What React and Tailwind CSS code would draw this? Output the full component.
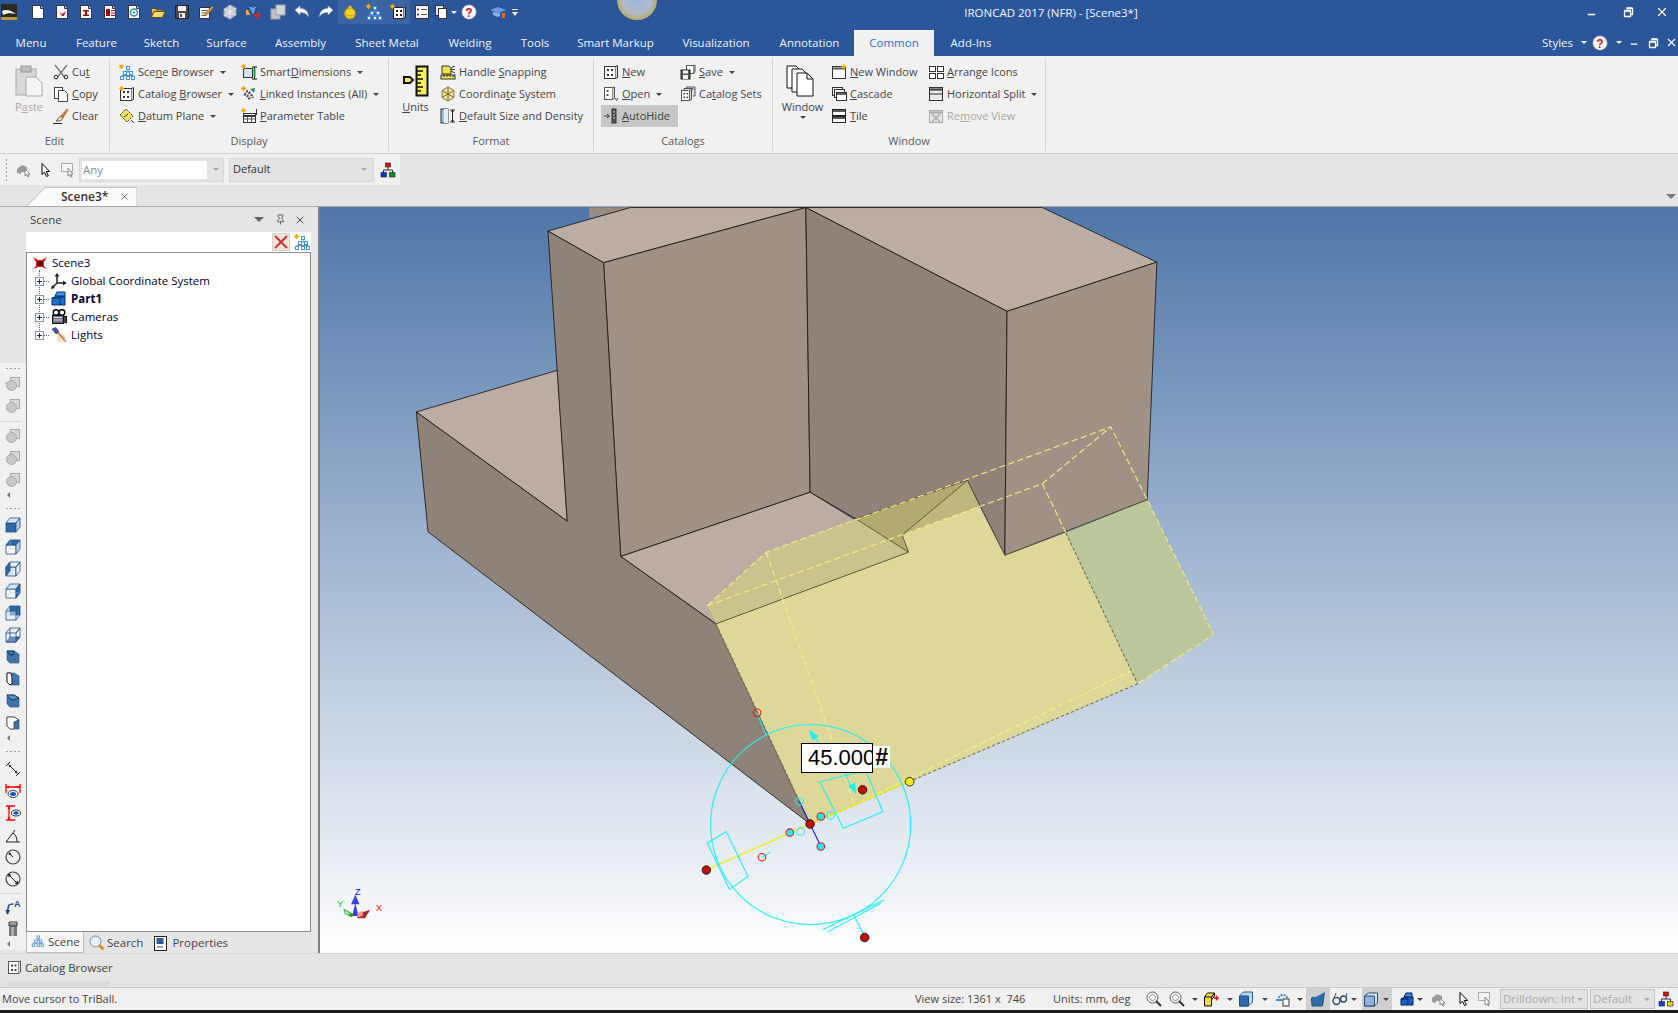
import { X, Minus, Pin } from 'lucide-react';

const FONT = 'font-["Open_Sans","Noto_Sans",sans-serif]';

const Ic = ({ w = 16, h = 16, children, className = '' }) => (
  <svg width={w} height={h} viewBox={`0 0 ${w} ${h}`} className={`shrink-0 ${className}`}>{children}</svg>
);

const Star = ({ x = 2.5, y = 2.5 }) => (
  <g stroke="#f2a900" strokeWidth="1">
    <path d={`M${x - 2.5} ${y}h5M${x} ${y - 2.5}v5M${x - 1.8} ${y - 1.8}l3.6 3.6M${x + 1.8} ${y - 1.8}l-3.6 3.6`} />
  </g>
);

const Caret = ({ className = '' }) => (
  <span className={`inline-block shrink-0 w-0 h-0 border-x-[3px] border-x-transparent border-t-[3px] border-t-[#444] ${className}`} />
);

const Page = ({ children, fill = '#fff', stroke = '#333' }) => (
  <Ic>
    <path d="M2.5 1.5h8l3 3v10h-11z" fill={fill} stroke={stroke} />
    <path d="M10.5 1.5v3h3" fill="#ddd" stroke={stroke} />
    {children}
  </Ic>
);

const TreeNodes = () => (
  <g fill="#fff" stroke="#4a8fd6" strokeWidth="1">
    <path d="M9 5v3M6 10V8h6v2M3 13v-1.500h6M14 13v-1.500H9" fill="none" />
    <rect x="7.500" y="2.500" width="3" height="3" />
    <rect x="4.500" y="7.500" width="3" height="3" />
    <rect x="10.500" y="7.500" width="3" height="3" />
    <rect x="1.500" y="12.500" width="3" height="3" />
    <rect x="7.500" y="12.500" width="3" height="3" />
    <rect x="12.500" y="12.500" width="3" height="3" />
  </g>
);

const TreeIcon = () => <Ic><TreeNodes /><Star /></Ic>;

const CatalogBox = ({ star, stroke = '#333' }) => (
  <Ic>
    <rect x="1.500" y="2.500" width="11" height="12" fill="#fff" stroke={stroke} />
    <path d="M12.500 2.500l2-1v12l-2 1" fill="#ddd" stroke={stroke} />
    <g fill={stroke}>
      <rect x="4" y="5" width="2" height="2" />
      <rect x="8" y="5" width="2" height="2" />
      <rect x="4" y="10" width="2" height="2" />
      <rect x="8" y="10" width="2" height="2" />
    </g>
    {star && <Star />}
  </Ic>
);

const Help = () => (
  <Ic>
    <circle cx="8" cy="8" r="7" fill="#fff" stroke="#c9c9c9" strokeDasharray="1.500 1" />
    <text x="8" y="12.500" textAnchor="middle" fontSize="12" fontWeight="700" fontFamily="Liberation Sans, sans-serif" fill="#e0101a">?</text>
  </Ic>
);

const Restore = () => (
  <Ic w={12} h={12}>
    <path d="M3.500 2.500h6v6h-2M1.500 5h6v5.500h-6z" fill="none" stroke="#fff" strokeWidth="1.300" />
    <path d="M1.500 4.500h6M3.500 2h6" stroke="#fff" strokeWidth="1.500" />
  </Ic>
);

const LogicTree = ({ top = '#e01010', l = '#1030d0', r = '#109030' }) => (
  <Ic>
    <path d="M8 5v3M3.500 11V8h9v3" fill="none" stroke="#333" />
    <rect x="5.500" y="1" width="5" height="4" fill={top} stroke="#222" strokeWidth=".6" />
    <rect x="1" y="10.500" width="5.500" height="4.500" fill={l} stroke="#222" strokeWidth=".6" />
    <rect x="9.500" y="10.500" width="5.500" height="4.500" fill={r} stroke="#222" strokeWidth=".6" />
  </Ic>
);

const Cursor = ({ ghost }) => (
  <Ic>
    <path d="M4 1.500v11l2.500-2.300 2 4.300 1.800-.800-2-4.200h3.400z" fill={ghost ? '#eee' : '#fff'} stroke={ghost ? '#aaa' : '#000'} />
  </Ic>
);

const SelectPart = () => (
  <Ic>
    <path d="M1 7l5-4 5 2v5H5v2l-4-1z" fill="#9a9a9a" />
    <path d="M9 7v7l1.800-1.500 1.200 2.500 1-.500-1.200-2.400H14z" fill="#fff" stroke="#888" />
  </Ic>
);

const SelectFace = () => (
  <Ic>
    <rect x="1.500" y="1.500" width="11" height="8" fill="#f4f4f4" stroke="#aaa" />
    <path d="M8 6v8l1.800-1.500 1.200 2.500 1-.500-1.200-2.400H13z" fill="#fff" stroke="#888" />
  </Ic>
);

// quick access bar icons
const qat = [
  <Page key="new" />,
  <Page key="a"><path d="M5 7l3 3 4-3-2 5H8z" fill="#c81e1e" /></Page>,
  <Page key="b"><path d="M5 6h6v1.500H9v3h2V12H5v-1.500h2v-3H5z" fill="#a01010" /></Page>,
  <Page key="c"><path d="M4 5h4v7H4zM9 6h4v1H9zM9 8.500h4v1H9zM9 11h4v1H9z" fill="#a01010" /></Page>,
  <Page key="d"><circle cx="8" cy="8.500" r="3.500" fill="none" stroke="#2a8fb0" strokeWidth="1.500" /><circle cx="8" cy="8.500" r="1" fill="#14506a" /></Page>,
  <Ic key="open">
    <path d="M1.500 4.500h4l1 1.500h6v2h-9l-2 5z" fill="#e8c14e" stroke="#6a5310" />
    <path d="M1.500 13.500l2.500-6h11l-2.500 6z" fill="#f3d873" stroke="#6a5310" />
  </Ic>,
  <Ic key="save">
    <path d="M1.500 1.500h13v13h-13z" fill="#4a4a4a" stroke="#222" />
    <rect x="4" y="2" width="8" height="5" fill="#f2f2f2" />
    <rect x="5" y="9" width="6" height="5" fill="#f2f2f2" />
    <rect x="6" y="10" width="2" height="3" fill="#444" />
  </Ic>,
  <Ic key="notes">
    <rect x="1.500" y="3.500" width="10" height="11" fill="#fff" stroke="#333" />
    <path d="M3.500 6.500h6M3.500 9h6M3.500 11.500h4" stroke="#555" />
    <path d="M7 10l7-8 1.500 1.500-7 8-2 .500z" fill="#f0a63a" stroke="#7a5210" strokeWidth=".6" />
  </Ic>,
  <Ic key="gray">
    <path d="M2 5l6-4 6 3v7l-6 4-6-3z" fill="#c4c9cf" stroke="#9ba0a6" />
    <path d="M8 1v14M2 5l12 6M14 4L2 12" stroke="#eef0f2" />
  </Ic>,
  <Ic key="cube">
    <rect x="0" y="6" width="4" height="5" fill="#e9a35a" />
    <path d="M3 3l4-2 3 2v5l-3 2-4-2z" fill="#3f78c4" stroke="#1c3f70" />
    <path d="M7 5.500L3 3M7 5.500L10 3M7 5.500V10" stroke="#cfe0f5" strokeWidth=".7" />
    <path d="M8 11.500h7M11.500 8v7" stroke="#d92a1a" strokeWidth="2" />
  </Ic>,
  <Ic key="pages">
    <rect x="1" y="5" width="9" height="10" fill="#bfc3c7" stroke="#9ca0a4" />
    <rect x="6" y="1" width="9" height="10" fill="#d2d5d8" stroke="#a4a8ac" />
  </Ic>,
  <Ic key="undo"><path d="M1 6l5-4v2.500c5 0 8 2.500 8.500 8-2-3-4-4-8.500-4V11z" fill="#fff" stroke="#aab4c2" strokeWidth=".6" /></Ic>,
  <Ic key="redo"><path d="M15 6l-5-4v2.500c-5 0-8 2.500-8.500 8 2-3 4-4 8.500-4V11z" fill="#fff" stroke="#aab4c2" strokeWidth=".6" /></Ic>,
  <Ic key="ball">
    <circle cx="8" cy="9.500" r="5.500" fill="#f3d21f" stroke="#b08c10" />
    <path d="M5 4.500h6L8 1z" fill="#e8b93a" />
    <path d="M3 10c3 2.500 7 2.500 10 0" stroke="#c79a16" fill="none" />
  </Ic>,
  <Ic key="tree"><TreeNodes /><Star /></Ic>,
  <Ic key="cat">
    <rect x="3.500" y="3.500" width="10" height="11" fill="#fff" stroke="#222" />
    <path d="M13.500 3.500l2-1v11l-2 1" fill="#bbb" stroke="#222" />
    <path d="M6 6h2v2H6zM10 6h2v2h-2zM6 10h2v2H6zM10 10h2v2h-2z" fill="#222" />
    <Star />
  </Ic>,
  <Ic key="list">
    <rect x="1.500" y="1.500" width="13" height="13" fill="#f4f4f4" stroke="#333" />
    <path d="M3 4.500h2v2H3zM3 9.500h2v2H3z" fill="#555" />
    <path d="M7 5.500h6M7 10.500h6" stroke="#555" />
  </Ic>,
  <span key="stack" className="flex items-center gap-[1px]">
    <Ic>
      <rect x="1.500" y="1.500" width="8" height="10" fill="#e8e8e8" stroke="#333" />
      <rect x="4.500" y="4.500" width="8" height="10" fill="#fff" stroke="#333" />
    </Ic>
    <span className="w-0 h-0 border-x-[3px] border-x-transparent border-t-[3px] border-t-white" />
  </span>,
];

const Cut = () => (
  <Ic>
    <path d="M2 1l11 14M14 1L3 15" stroke="#777" strokeWidth="1.400" />
    <circle cx="3" cy="13" r="1.800" fill="#fff" stroke="#222" />
    <circle cx="13" cy="13" r="1.800" fill="#fff" stroke="#222" />
  </Ic>
);
const Copy = () => (
  <Ic>
    <rect x="1.500" y="1.500" width="8" height="11" fill="#fff" stroke="#444" />
    <path d="M5.500 4.500h6l3 3v8h-9z" fill="#fff" stroke="#444" />
  </Ic>
);
const Brush = () => (
  <Ic>
    <path d="M8 8l6-7 1 1-5 8z" fill="#d87a2a" stroke="#8a4a10" strokeWidth=".5" />
    <path d="M3 13c2-1 2-4 5-5l2 2c-1 3-4 3-7 3z" fill="#e8d9a8" stroke="#333" strokeWidth=".7" />
    <path d="M0 15.500h9" stroke="#222" />
  </Ic>
);
const Datum = () => (
  <Ic>
    <path d="M1 7l6-6 7 7-6 6z" fill="#f0e35a" stroke="#333" strokeDasharray="2 1" />
    <path d="M5 9l4-3" stroke="#333" />
    <path d="M12 12l3 3" stroke="#333" />
  </Ic>
);
const Smart = () => (
  <Ic>
    <rect x="2.500" y="4.500" width="9" height="9" fill="#cfe3f5" stroke="#333" />
    <path d="M13.500 3v12M11 3h5M11 15h5" stroke="#111" />
    <path d="M13.500 5v8" stroke="#1c9c3a" strokeWidth="2" />
    <Star />
  </Ic>
);
const Linked = () => (
  <Ic>
    <path d="M3 8c3 1 5 3 6 6M5 5c3 1 6 4 7 7" stroke="#555" strokeWidth="2.500" strokeDasharray="2 1" fill="none" />
    <path d="M9 3l5-1-1 5z" fill="#2a8a6a" />
    <Star />
  </Ic>
);
const Table = () => (
  <Ic>
    <rect x="2.500" y="5.500" width="12" height="9" fill="#fff" stroke="#333" />
    <path d="M2.500 8h12" stroke="#333" strokeWidth="2" />
    <path d="M6.500 8v6M10.500 8v6M2.500 11h12" stroke="#555" />
    <path d="M15.500 1v6" stroke="#333" />
    <Star />
  </Ic>
);
const HandleSnap = () => (
  <Ic>
    <path d="M2 2h7l2 3v5H2z" fill="#f1e34b" stroke="#333" />
    <path d="M11 4l4-2M11 5.500h4M11 7l4 2" stroke="#333" />
    <rect x="1" y="11" width="14" height="4" fill="#f1e34b" stroke="#333" />
    <path d="M4 11v2M7 11v2M10 11v2M13 11v2" stroke="#333" />
  </Ic>
);
const CoordSys = () => (
  <Ic>
    <path d="M8 1l6 3.500v7L8 15l-6-3.500v-7z" fill="#efe29a" stroke="#8a7a3a" />
    <path d="M8 1v14M2 4.500l12 7M14 4.500l-12 7" stroke="#7a6a2a" />
  </Ic>
);
const DefaultSize = () => (
  <Ic>
    <rect x="1" y="1" width="7" height="14" fill="#9bbfe6" stroke="#333" />
    <rect x="4" y="1" width="4" height="14" fill="#e6eef8" />
    <path d="M10 2h5M10 14h5M12.500 2v12" stroke="#222" />
    <path d="M11 4l1.500-2L14 4M11 12l1.500 2L14 12" fill="#222" />
  </Ic>
);
const OpenCat = () => (
  <Ic>
    <rect x="1.500" y="1.500" width="8" height="12" fill="#fff" stroke="#555" />
    <path d="M9.500 1.500l2-.500v11l-2 1.500" fill="#ccc" stroke="#555" />
    <path d="M3.500 4h2v2h-2zM3.500 8h2v2h-2z" fill="#555" />
    <path d="M12 12l1.500 2.500L15 12" stroke="#444" fill="none" />
  </Ic>
);
const SaveCat = () => (
  <Ic>
    <rect x="6.500" y="1.500" width="7" height="8" fill="#fff" stroke="#555" />
    <path d="M13.500 1.500l1.500-.500v7l-1.500 1" fill="#ccc" stroke="#555" />
    <rect x="1" y="6" width="9" height="9" fill="#55604a" stroke="#222" />
    <rect x="3" y="6.500" width="5" height="3" fill="#f2f2f2" />
    <rect x="3" y="11" width="5" height="4" fill="#f2f2f2" />
  </Ic>
);
const CatSets = () => (
  <Ic>
    <rect x="1.500" y="4.500" width="8" height="10" fill="#fff" stroke="#555" />
    <path d="M9.500 4.500l2-1v10l-2 1zM4 4V2.500h9V4M6.500 2.500V1h8.500v9h-2" fill="#ddd" stroke="#555" />
    <path d="M3.500 7h1.500v1.500H3.500zM6.500 7H8v1.500H6.500zM3.500 10.500h1.500V12H3.500zM6.500 10.500H8V12H6.500z" fill="#444" />
  </Ic>
);
const AutoHideIc = () => (
  <Ic>
    <path d="M1 8h5M4 6l2.500 2L4 10" stroke="#444" fill="none" />
    <rect x="9" y="1" width="4" height="14" fill="#555" stroke="#333" />
    <path d="M10 4h2M10 7h2M10 10h2" stroke="#ccc" />
  </Ic>
);
const NewWin = () => (
  <Ic>
    <rect x="1.500" y="2.500" width="13" height="12" fill="#fff" stroke="#333" />
    <path d="M1.500 4.500h13" stroke="#555" strokeWidth="2" />
    <Star x={13} y={2.5} />
  </Ic>
);
const CascadeIc = () => (
  <Ic>
    <rect x="1.500" y="1.500" width="10" height="8" fill="#eee" stroke="#333" />
    <rect x="3.500" y="3.500" width="10" height="8" fill="#eee" stroke="#333" />
    <rect x="5.500" y="6.500" width="10" height="8" fill="#fff" stroke="#333" />
    <path d="M5.500 8h10" stroke="#333" strokeWidth="1.500" />
  </Ic>
);
const TileIc = () => (
  <Ic>
    <rect x="1.500" y="1.500" width="13" height="6" fill="#fff" stroke="#222" />
    <path d="M1.500 3h13" stroke="#222" strokeWidth="1.500" />
    <rect x="1.500" y="8.500" width="13" height="6" fill="#fff" stroke="#222" />
    <path d="M1.500 10h13" stroke="#222" strokeWidth="1.500" />
  </Ic>
);
const ArrangeIc = () => (
  <Ic>
    <rect x="1.500" y="2.500" width="6" height="5" fill="#fff" stroke="#333" />
    <rect x="9.500" y="2.500" width="6" height="5" fill="#fff" stroke="#333" />
    <rect x="1.500" y="9.500" width="6" height="5" fill="#fff" stroke="#333" />
    <rect x="9.500" y="9.500" width="6" height="5" fill="#fff" stroke="#333" />
  </Ic>
);
const SplitIc = () => (
  <Ic>
    <rect x="1.500" y="1.500" width="13" height="13" fill="#e8e8e8" stroke="#333" />
    <path d="M1.500 3.500h13" stroke="#333" strokeWidth="2" />
    <path d="M1.500 8h13" stroke="#333" />
  </Ic>
);
const RemoveIc = () => (
  <Ic>
    <rect x="1.500" y="2.500" width="13" height="12" fill="#e6e6e6" stroke="#aaa" />
    <path d="M1.500 4.500h13" stroke="#aaa" strokeWidth="2" />
    <path d="M4 6l8 8M12 6l-8 8" stroke="#b5b5b5" strokeWidth="2" />
  </Ic>
);

const Row = ({ icon, children, caret, active, dim, className = '' }) => (
  <div className={`h-[22px] flex items-center gap-[3px] whitespace-nowrap ${active ? 'bg-[#c6c6c6]' : ''} ${dim ? 'text-[#a8a8a8]' : 'text-[#444]'} ${className}`}>
    {icon}
    <span>{children}</span>
    {caret && <Caret className="ml-[3px]" />}
  </div>
);

const BigBtn = ({ icon, children, caret, dim, className = '' }) => (
  <div className={`h-[66px] flex flex-col items-center ${dim ? 'text-[#a8a8a8]' : 'text-[#444]'} ${className}`}>
    <div className="h-[32px] mt-[4px] mb-[1px]">{icon}</div>
    <span className="leading-[18px]">{children}</span>
    {caret && <Caret />}
  </div>
);

const Group = ({ label, width, children }) => (
  <div className={`${width} shrink-0 flex flex-col border-r border-[#d6d6d6] my-[2px]`}>
    <div className="h-[66px] mt-[3px] flex">{children}</div>
    <div className="mt-[5px] text-center text-[#5a5a5a] leading-[18px]">{label}</div>
  </div>
);

const tabs = [
  ['Menu', 'w-[62px]'], ['Feature', 'w-[69px]'], ['Sketch', 'w-[61px]'], ['Surface', 'w-[69px]'],
  ['Assembly', 'w-[79px]'], ['Sheet Metal', 'w-[94px]'], ['Welding', 'w-[72px]'], ['Tools', 'w-[58px]'],
  ['Smart Markup', 'w-[103px]'], ['Visualization', 'w-[98px]'], ['Annotation', 'w-[89px]'],
];

const Cube = ({ f = '#fff', t = '#dbe7f4', r = '#b9d0ea', back }) => (
  <Ic>
    <path d="M1 6h10v9H1z" fill={f} stroke="#1f4d80" strokeWidth=".8" />
    <path d="M1 6l4-5h10l-4 5z" fill={t} stroke="#1f4d80" strokeWidth=".8" />
    <path d="M11 6l4-5v9l-4 5z" fill={r} stroke="#1f4d80" strokeWidth=".8" />
    {back}
  </Ic>
);

const IsoCube = ({ corner }) => (
  <Ic>
    <path d="M2 2h7l5 3v9H5l-3-3z" fill="#3f74ad" stroke="#1f4d80" strokeWidth=".6" />
    {corner === 'a' && <path d="M2 2h7l-1 4H5z" fill="#3f74ad" stroke="#16395e" />}
    {corner === 'b' && <path d="M2 2h4l1 5v6l-2 1-3-3z" fill="#fff" stroke="#222" />}
    {corner === 'c' && <path d="M2 2h7l5 3-6 2-3-1z" fill="#5c8dc4" stroke="#16395e" />}
    {corner === 'd' && <path d="M2 2h7l5 3-5 2v7H5l-3-3z" fill="#fff" stroke="#222" strokeWidth=".7" />}
  </Ic>
);

const viewCubes = [
  <Cube key="1" f="#2f6ba8" />,
  <Cube key="2" t="#2f6ba8" back={<path d="M5 1v9h10M5 10l-4 5" stroke="#9bb8d8" strokeWidth=".6" fill="none" />} />,
  <Ic key="3">
    <path d="M1 6h10v9H1z" fill="#dbe7f4" stroke="#1f4d80" strokeWidth=".8" />
    <path d="M11 6l4-5v9l-4 5zM5 1h10l-4 5H1z" fill="#eef4fb" stroke="#1f4d80" strokeWidth=".8" />
    <path d="M1 6l4-5v9l-4 5z" fill="#2f6ba8" stroke="#1f4d80" strokeWidth=".8" />
  </Ic>,
  <Cube key="4" r="#2f6ba8" back={<path d="M5 1v9h10M5 10l-4 5" stroke="#9bb8d8" strokeWidth=".6" fill="none" />} />,
  <Ic key="5">
    <path d="M5 1h10v9H5z" fill="#2f6ba8" stroke="#1f4d80" strokeWidth=".8" />
    <path d="M1 6h10v9H1z" fill="#dbe7f4" fillOpacity=".55" stroke="#1f4d80" strokeWidth=".8" />
    <path d="M1 6l4-5M11 6l4-5M11 15l4-5" stroke="#1f4d80" strokeWidth=".8" />
  </Ic>,
  <Ic key="6">
    <path d="M1 15l4-5h10l-4 5z" fill="#2f6ba8" stroke="#1f4d80" strokeWidth=".8" />
    <path d="M1 6h10v9H1zM1 6l4-5h10l-4 5M11 6l4-5v9M5 1v9" fill="#eef4fb" fillOpacity=".3" stroke="#1f4d80" strokeWidth=".8" />
  </Ic>,
  <IsoCube key="7" corner="a" />,
  <IsoCube key="8" corner="b" />,
  <IsoCube key="9" corner="c" />,
  <IsoCube key="10" corner="d" />,
];

const dimIcons = [
  <Ic key="1">
    <path d="M1 5l4-4M11 15l4-4M3.500 3.500l9 9" stroke="#222" fill="none" />
    <path d="M3.500 3.500l3 1-2 2zM12.500 12.500l-3-1 2-2z" fill="#222" />
  </Ic>,
  <Ic key="2">
    <path d="M1 1v9M15 1v9M1 4h14" stroke="#f00" strokeWidth="1.300" />
    <path d="M1 4l3-1.500v3zM15 4l-3-1.500v3z" fill="#f00" />
    <ellipse cx="8" cy="11" rx="5" ry="3.500" fill="#fff" stroke="#333" />
    <ellipse cx="8" cy="11" rx="3" ry="2" fill="#0a55d8" />
  </Ic>,
  <Ic key="3">
    <path d="M1 1h9M1 15h9M4 1v14" stroke="#f00" strokeWidth="1.300" />
    <path d="M4 1l-1.500 3h3zM4 15l-1.500-3h3z" fill="#f00" />
    <ellipse cx="11" cy="8" rx="4.500" ry="3" fill="#fff" stroke="#333" />
    <ellipse cx="11" cy="8" rx="2.700" ry="1.700" fill="#0a55d8" />
  </Ic>,
  <Ic key="4">
    <path d="M1 15h14M1 15L10 3" stroke="#222" fill="none" />
    <path d="M8 6c3 2 4 5 4 9" stroke="#222" fill="none" />
  </Ic>,
  <Ic key="5">
    <circle cx="8" cy="8" r="7" fill="none" stroke="#444" strokeWidth="1.200" />
    <path d="M4 4l4 4" stroke="#222" />
    <path d="M3.500 3.500l3 .5-2.500 2.500z" fill="#222" />
  </Ic>,
  <Ic key="6">
    <circle cx="8" cy="8" r="7" fill="none" stroke="#444" strokeWidth="1.200" />
    <path d="M3.500 3.500l9 9" stroke="#222" />
    <path d="M3 3l3.500.5L3.500 6.500zM13 13l-3.500-.5 3-3z" fill="#222" />
  </Ic>,
];

const Dots = () => <div className="h-[10px] flex items-center justify-center gap-[2px]">{[0, 1, 2, 3].map(i => <span key={i} className="w-[2px] h-[1px] bg-[#999]" />)}</div>;
const Tri = () => <div className="h-[8px] flex items-center pl-[7px]"><span className="w-0 h-0 border-y-[3px] border-y-transparent border-r-[3px] border-r-[#777]" /></div>;
const Slot = ({ children }) => <div className="h-[22px] flex items-center justify-center">{children}</div>;
const Overlap = ({ plus }) => (
  <Ic>
    {plus && <path d="M0 7h4" stroke="#555" />}
    <rect x="5.500" y="1.500" width="9" height="9" fill="#bbb" stroke="#555" />
    <circle cx="6.500" cy="9.500" r="5" fill="#999" stroke="#555" />
  </Ic>
);

const treeRows = [
  {
    label: 'Global Coordinate System',
    icon: (
      <Ic>
        <path d="M6 1v9M6 10h9M6 10l-5 5" stroke="#222" strokeWidth="1.500" />
        <path d="M6 0l-2.500 3.500h5zM15.500 10L12 7.500v5zM0 16l1-4 3 3z" fill="#222" />
      </Ic>
    ),
  },
  {
    label: 'Part1',
    bold: true,
    icon: (
      <Ic>
        <path d="M1 7l5-2h8v9H1z" fill="#1f6fd0" stroke="#0b2f66" />
        <path d="M4 5l2-4h8v4H6z" fill="#3f92ea" stroke="#0b2f66" />
        <path d="M1 7h8v7" fill="none" stroke="#0b2f66" />
        <path d="M9 7l5-2" stroke="#0b2f66" />
      </Ic>
    ),
  },
  {
    label: 'Cameras',
    icon: (
      <Ic>
        <circle cx="5" cy="3.500" r="2.800" fill="#fff" stroke="#111" strokeWidth="1.500" />
        <circle cx="11" cy="3.500" r="2.800" fill="#fff" stroke="#111" strokeWidth="1.500" />
        <rect x="1.500" y="6.500" width="11" height="8" fill="#6f6f8a" stroke="#111" />
        <path d="M3 8.500h8M3 11h8" stroke="#ddd" />
        <path d="M12.500 8l3-1v7l-3-1z" fill="#444" stroke="#111" />
      </Ic>
    ),
  },
  {
    label: 'Lights',
    icon: (
      <Ic>
        <circle cx="10" cy="11" r="4.500" fill="#efe6b8" />
        <path d="M1 2l4-1.500L8 5 5 7z" fill="#2a5ec8" stroke="#123" strokeWidth=".5" />
        <path d="M4 3l11 12" stroke="#e02020" />
        <path d="M7 5l7 7" stroke="#888" strokeWidth=".8" />
      </Ic>
    ),
  },
];

// drawn in the coordinates of the scaled screenshot, viewBox maps them onto the viewport
const Scene = () => (
  <svg viewBox="299 193.500 1269 697" preserveAspectRatio="none" className="absolute inset-0 w-full h-full">
    <g stroke="#1c1a18" strokeWidth=".8" strokeLinejoin="round">
      <path d="M550.600 194H589L550.600 204z" fill="#9a8b80" stroke="none" />
      <path d="M512 216l77-22h164L564 245.500z" fill="#bbada3" />
      <path d="M753 194h221l107 51-140 46z" fill="#bbada3" />
      <path d="M564 245.500L753 194l4 266-177 60z" fill="#a09186" />
      <path d="M753 194L941 291 939 519 904 449 800 485 757 460z" fill="#8f8279" />
      <path d="M941 291l140-46-9 222-133 52z" fill="#a09186" />
      <path d="M580 520l177-60 92 56-180 67z" fill="#bbada3" />
      <path d="M389 385l132-39 9 141z" fill="#bbada3" />
      <path d="M512 216L564 245.500 580 520 669 583 757 770 400 497 389 385 530 487z" fill="#8f8279" />
    </g>
    <path d="M669 583L849 516 843 500 915 473 939 519 996 498 1063 639 757 770z" fill="#ddd79a" />
    <path d="M996 498l76-31 62 126-71 46z" fill="#bcc69c" />
    <path d="M669 583l-8-17 55-50 84-31 49 31z" fill="#c9c48d" />
    <path d="M800 485l104-36-61 51 6 16z" fill="#b1ab72" />
    <path d="M843 500l61-51 11 24z" fill="#bdb67d" />
    <path d="M669 583L849 516M800 485l49 31-6-16 61-51 35 70 133-52" stroke="#5f5b3a" strokeWidth=".9" fill="none" />
    <g stroke="#f4f07c" strokeWidth="1" strokeDasharray="6 3" fill="none">
      <path d="M661 566l55-50 322-117 34 68 62 126-71 46" />
      <path d="M661 566l313-114 64-53" />
      <path d="M716 516l84 240" />
      <path d="M974 452l22 46" />
      <path d="M1059 626L778 762" />
      <path d="M669 583l88 187" stroke="#77734a" strokeDasharray="3 2" />
      <path d="M757 770l306-131" stroke="#77734a" strokeDasharray="3 2" />
      <path d="M996 498l67 141" stroke="#6c6d48" strokeDasharray="3 2" />
    </g>
    <path d="M660 813l97-43" stroke="#f0ee20" strokeWidth="1.300" />
    <path d="M757 770l10 21M747 749l10 21" stroke="#1020e0" />
    <path d="M757 770l93-40" stroke="#f0ee20" strokeWidth="1.300" />
    <g stroke="#19f0f5" strokeWidth="1" fill="none">
      <ellipse cx="757.500" cy="770.500" rx="93.500" ry="93.500" />
      <path d="M678.600 777L661 788l20.500 43 17.500-12z" />
      <path d="M766 730.500L788 774l37-15.500-16-38.500z" />
      <path d="M769 868.500l57-27.500M773 871l50-27" />
      <path d="M798 855l10 21" />
      <path d="M707 666l9 21M712 801l8-5" />
      <path d="M759 687l7.500 8" />
      <path d="M789 721l7 16" />
    </g>
    <path d="M756 682l9 6-6 4zM800 742l-7-7 6-4z" fill="#19f0f5" />
    <g stroke="#ee1010" strokeWidth="1">
      <circle cx="738" cy="778" r="3.500" fill="#19f0f5" />
      <circle cx="767" cy="763" r="3.500" fill="#19f0f5" />
      <circle cx="767" cy="791" r="3.500" fill="#19f0f5" />
      <circle cx="707.500" cy="666" r="3.500" fill="none" />
      <circle cx="712" cy="801" r="3.500" fill="none" />
    </g>
    <g stroke="#19f0f5" strokeWidth="1" fill="none">
      <circle cx="747" cy="749" r="3.500" />
      <circle cx="776" cy="762" r="3.500" />
      <circle cx="748" cy="777" r="3.500" />
    </g>
    <g stroke="#111" strokeWidth=".8" fill="#c00f0f">
      <circle cx="757" cy="770" r="4" />
      <circle cx="660" cy="813" r="4" />
      <circle cx="806" cy="738" r="4" />
      <circle cx="808" cy="876" r="4" />
      <circle cx="850" cy="730.500" r="4" fill="#f2ee1a" />
    </g>
    <path d="M332 844l-3 12h6z" fill="#3a40d8" />
    <path d="M332 836l-4 9h8z" fill="#3a40d8" />
    <path d="M330 854l-9-5 1 5 7 3z" fill="#2d9a34" />
    <path d="M334 854l12-4-5 8-7 0z" fill="#a82a2a" />
    <path d="M322 850l6 4-6 1z" fill="#9be59b" />
    <path d="M334 853l5-2 0 5-5 1z" fill="#f09a9a" />
    <g fontFamily="Liberation Sans, sans-serif" fontSize="9">
      <text x="331.500" y="836" fill="#1010e8">Z</text>
      <text x="315" y="848" fill="#14d014">Y</text>
      <text x="351" y="851" fill="#e81010">X</text>
    </g>
  </svg>
);

const statusIcons = {
  zoom: (
    <Ic>
      <circle cx="6.500" cy="6.500" r="5.500" fill="#fff" stroke="#555" />
      <circle cx="6.500" cy="6.500" r="3" fill="none" stroke="#888" />
      <path d="M10 10l5 5" stroke="#333" strokeWidth="2" />
    </Ic>
  ),
  yellow: (
    <Ic>
      <path d="M1.500 6l3-4h7v3l-3 4v6h-7z" fill="#f0dc3c" stroke="#111" />
      <path d="M8.500 15V6h-7M8.500 6l3-4" fill="none" stroke="#111" />
      <path d="M11 7h5M13.500 4.500v5" stroke="#e01010" strokeWidth="1.500" />
    </Ic>
  ),
  blue: (
    <Ic>
      <path d="M1.500 5l4-4h9v10l-4 4h-9z" fill="#c2d8ee" stroke="#2c5a8a" />
      <path d="M1.500 5h9v10h-9z" fill="#2f6ba8" stroke="#1f4d80" />
    </Ic>
  ),
  orbit: (
    <Ic>
      <path d="M4 7c0-4 8-4 8 0" stroke="#3a8ad0" strokeWidth="2" fill="none" strokeDasharray="2 1" />
      <rect x="8" y="8" width="6" height="7" fill="#fff" stroke="#333" />
      <path d="M1 9h6" stroke="#3a8ad0" strokeWidth="2" />
    </Ic>
  ),
  face: (
    <Ic>
      <path d="M1.500 7l3-1 10-5-2 14H2z" fill="#2f6ba8" stroke="#1f4d80" />
      <path d="M4.500 6l10-5" stroke="#cfe0f5" />
    </Ic>
  ),
  glasses: (
    <Ic>
      <circle cx="4.500" cy="10" r="3.500" fill="none" stroke="#2c4a6a" strokeWidth="1.400" />
      <circle cx="11.500" cy="8" r="3" fill="none" stroke="#2c4a6a" strokeWidth="1.400" />
      <path d="M2 7l2-5M8 9l1-1M14 6l1-4" stroke="#555" />
    </Ic>
  ),
  shade: (
    <Ic>
      <path d="M1.500 5l4-3h9v10l-3 3h-10z" fill="#dfe9f5" stroke="#2c4a6a" />
      <path d="M1.500 5h10v10h-10z" fill="#8db2e0" stroke="#2c4a6a" />
    </Ic>
  ),
  part: (
    <Ic>
      <path d="M2 8l4-2h8v8H2z" fill="#1a5fd0" stroke="#0b2050" />
      <path d="M5 6l2-4h6v4H7z" fill="#2f88ea" stroke="#0b2050" />
      <path d="M2 8h7v6" fill="none" stroke="#0b2050" />
    </Ic>
  ),
};

const StatusItem = ({ className, children, caretClass, active }) => (
  <div className={`${className} h-[23px] shrink-0 flex items-center ${active ? 'bg-[#cfcfcf]' : ''}`}>
    {children}
    {caretClass && <Caret className={caretClass} />}
  </div>
);

export default function App() {
  return (
    <div className={`w-[1678px] h-[1013px] flex flex-col overflow-hidden bg-[#e5e5e5] text-[11px] ${FONT}`}>
      {/* title bar */}
      <div className="h-[28px] shrink-0 relative bg-[#2b579a] flex text-[#f2f5fa]">
        <div className="absolute left-[617px] top-[-20px] w-[40px] h-[40px] rounded-full bg-[radial-gradient(circle_closest-side,#9ab7df_0%,#aebccb_70%,#b7b27e_90%,#b3ad70_100%)]" />
        <div className="absolute left-[851px] w-[400px] text-center h-[26px] leading-[26px] text-[11.500px]">IRONCAD 2017 (NFR) - [Scene3*]</div>
        <div className="h-[24px] flex">
          <div className="w-[18px] flex items-center justify-center">
            <Ic>
              <rect width="16" height="16" fill="#2a2a24" />
              <path d="M1 7c4-2 9-1 14 3-5-1-9-1-13 1z" fill="#f0f0ea" />
              <path d="M0 13h16v3H0z" fill="#b89a38" />
            </Ic>
          </div>
          <div className="w-[7.500px]" />
          {qat.map((ic, i) => (
            <div key={i} className={`w-[24px] flex items-center justify-center ${i >= 13 && i <= 15 ? 'bg-[#3a64a4]' : ''}`}>{ic}</div>
          ))}
          <div className="w-[18px] ml-[2px] flex items-center justify-center"><Help /></div>
          <div className="w-[36px] ml-[2px] flex items-center justify-center">
            <Ic>
              <path d="M0 6l8-3 8 3-8 3z" fill="#6f9be0" />
              <path d="M3 8v3l5 2 2-1V9z" fill="#8aaef0" />
              <path d="M12 9h3v5h-3z" fill="#e06a20" />
            </Ic>
          </div>
          <div className="w-[10px] flex flex-col items-center justify-center gap-[2px] -ml-[6px]">
            <span className="w-[6px] h-[1px] bg-white" />
            <span className="w-0 h-0 border-x-[3px] border-x-transparent border-t-[4px] border-t-white" />
          </div>
        </div>
        <div className="ml-auto h-[24px] flex items-center">
          <div className="w-[38px] flex justify-center"><Minus size={11} strokeWidth={3} className="mt-[4px] text-white" /></div>
          <div className="w-[38px] flex justify-center"><Restore /></div>
          <div className="w-[30px] pr-[2px] flex justify-center"><X size={14} strokeWidth={2} className="text-white" /></div>
        </div>
      </div>

      {/* ribbon tabs */}
      <div className="h-[28px] shrink-0 bg-[#2b579a] flex text-[#eef2f8] text-[11.500px]">
        {tabs.map(([t, w]) => (
          <div key={t} className={`${w} flex items-center justify-center pt-[2px]`}>{t}</div>
        ))}
        <div className="w-[80px] mt-[2px] bg-[#f1f1f1] text-[#2b6fd0] flex items-center justify-center">Common</div>
        <div className="w-[74px] flex items-center justify-center pt-[2px]">Add-Ins</div>
        <div className="ml-auto flex items-center pt-[1px]">
          <span className="mr-[8px]">Styles</span>
          <span className="w-0 h-0 border-x-[3px] border-x-transparent border-t-[3px] border-t-white mr-[5px]" />
          <Help />
          <span className="w-0 h-0 border-x-[3px] border-x-transparent border-t-[3px] border-t-white ml-[8px] mr-[7px]" />
          <Minus size={10} strokeWidth={3} className="mt-[3px] mr-[9px] text-white" />
          <span className="mr-[5px]"><Restore /></span>
          <X size={13} strokeWidth={2} className="text-white" />
        </div>
      </div>

      {/* ribbon */}
      <div className="h-[98px] shrink-0 bg-[#f1f1f1] flex border-b border-[#cfcfcf]">
        <Group label="Edit" width="w-[110px]">
          <BigBtn dim className="w-[48px] ml-[5px]" icon={
            <Ic w={32} h={32}>
              <rect x="3" y="4" width="20" height="26" fill="#d8d8d8" stroke="#aaa" />
              <rect x="8" y="1" width="10" height="6" fill="#bdbdbd" stroke="#999" />
              <path d="M13 12h10l6 6v13H13z" fill="#f4f4f4" stroke="#aaa" />
            </Ic>
          }>P<u>a</u>ste</BigBtn>
          <div className="flex flex-col">
            <Row icon={<Cut />}>Cu<u>t</u></Row>
            <Row icon={<Copy />}><u>C</u>opy</Row>
            <Row icon={<Brush />}>Clear</Row>
          </div>
        </Group>
        <Group label="Display" width="w-[279px]">
          <div className="w-[122px] ml-[9px] flex flex-col">
            <Row caret icon={<TreeIcon />}>Sce<u>n</u>e Browser</Row>
            <Row caret icon={<CatalogBox star />}>Catalog <u>B</u>rowser</Row>
            <Row caret icon={<Datum />}><u>D</u>atum Plane</Row>
          </div>
          <div className="flex flex-col">
            <Row caret icon={<Smart />}>Smart<u>D</u>imensions</Row>
            <Row caret icon={<Linked />}><u>L</u>inked Instances (All)</Row>
            <Row icon={<Table />}><u>P</u>arameter Table</Row>
          </div>
        </Group>
        <Group label="Format" width="w-[205px]">
          <BigBtn className="w-[49px] ml-[2px]" icon={
            <Ic w={28} h={32}>
              <rect x="14.500" y="1.500" width="11" height="29" fill="#f2ee5c" stroke="#111" strokeWidth="2" />
              <path d="M15 6h6M15 10h4M15 14h6M15 18h4M15 22h6M15 26h4" stroke="#111" strokeWidth="1.500" />
              <path d="M2 12h6l3 3-3 3H2z" fill="#f2ee5c" stroke="#111" strokeWidth="2" />
            </Ic>
          }><u>U</u>nits</BigBtn>
          <div className="flex flex-col">
            <Row icon={<HandleSnap />}>Handle <u>S</u>napping</Row>
            <Row icon={<CoordSys />}>Coordina<u>t</u>e System</Row>
            <Row icon={<DefaultSize />}><u>D</u>efault Size and Density</Row>
          </div>
        </Group>
        <Group label="Catalogs" width="w-[179px]">
          <div className="w-[77px] ml-[7px] flex flex-col">
            <Row className="pl-[2px]" icon={<CatalogBox />}><u>N</u>ew</Row>
            <Row className="pl-[2px]" caret icon={<OpenCat />}><u>O</u>pen</Row>
            <Row className="pl-[2px]" active icon={<AutoHideIc />}><u>A</u>utoHide</Row>
          </div>
          <div className="ml-[2px] flex flex-col">
            <Row caret icon={<SaveCat />}><u>S</u>ave</Row>
            <Row icon={<CatSets />}>Ca<u>t</u>alog Sets</Row>
          </div>
        </Group>
        <Group label="Window" width="w-[273px]">
          <BigBtn caret className="w-[57px] ml-[1px]" icon={
            <Ic w={30} h={32} className="-ml-[4px]">
              <path d="M1 1h9l4 4v18H1z" fill="#fff" stroke="#111" />
              <path d="M6 4h10l4 4v19H6z" fill="#fff" stroke="#111" />
              <path d="M11 8h10l6 6v17H11z" fill="#fff" stroke="#111" />
              <path d="M21 8v6h6" fill="none" stroke="#111" />
            </Ic>
          }>Window</BigBtn>
          <div className="w-[97px] flex flex-col">
            <Row icon={<NewWin />}><u>N</u>ew Window</Row>
            <Row icon={<CascadeIc />}><u>C</u>ascade</Row>
            <Row icon={<TileIc />}><u>T</u>ile</Row>
          </div>
          <div className="flex flex-col">
            <Row icon={<ArrangeIc />}><u>A</u>rrange Icons</Row>
            <Row caret icon={<SplitIc />}>Horizontal Split</Row>
            <Row dim icon={<RemoveIc />}>Re<u>m</u>ove View</Row>
          </div>
        </Group>
      </div>

      {/* selection toolbar */}
      <div className="h-[31px] shrink-0 w-[400px] bg-[#f0f0f0] flex items-center">
        <div className="w-[13px] flex flex-col items-center gap-[2px]">
          {[0, 1, 2, 3, 4, 5].map(i => <span key={i} className="w-[1px] h-[2px] bg-[#999]" />)}
        </div>
        <div className="w-[22px] flex justify-center"><SelectPart /></div>
        <div className="w-[22px] flex justify-center"><Cursor /></div>
        <div className="w-[22px] flex justify-center"><SelectFace /></div>
        <div className="w-[145px] h-[24px] bg-[#e3e3e3] border border-[#d8d8d8] flex items-center pl-[2px] pr-[4px]">
          <div className="w-[125px] h-[18px] bg-white text-[#8a8a8a] text-[11.500px] leading-[18px] pl-[1px]">Any</div>
          <span className="ml-auto w-0 h-0 border-x-[3px] border-x-transparent border-t-[3px] border-t-[#aaa]" />
        </div>
        <div className="ml-[5px] w-[145px] h-[24px] bg-[#e3e3e3] border border-[#d8d8d8] flex items-center pl-[3px] pr-[6px] text-[#333] text-[11px]">
          Default
          <span className="ml-auto w-0 h-0 border-x-[3px] border-x-transparent border-t-[3px] border-t-[#aaa]" />
        </div>
        <div className="ml-[6px]"><LogicTree /></div>
      </div>

      {/* document tabs */}
      <div className="h-[22px] shrink-0 flex items-end relative border-b border-[#a8a8a8]">
        <div className="relative ml-[27px] w-[110px] h-[19px] flex items-center pl-[34px] font-semibold text-[#333] text-[12px]">
          <svg viewBox="0 0 110 19" className="absolute inset-0 w-full h-full">
            <path d="M0 19L18 .5h92V19" fill="#fafafa" stroke="#bdbdbd" />
          </svg>
          <span className="relative">Scene3*</span>
          <X size={11} strokeWidth={1.600} className="relative ml-[11px] text-[#444]" />
        </div>
        <span className="absolute right-[2px] top-[9px] w-0 h-0 border-x-[5px] border-x-transparent border-t-[5px] border-t-[#777]" />
      </div>

      {/* main area */}
      <div className="flex-1 flex min-h-0">
        <div className="w-[26px] shrink-0">
          <div className="mt-[156px] bg-[#f0f0f0] pb-[2px]">
            <Dots />
            <Slot><span className="opacity-45 flex"><Overlap plus /></span></Slot>
            <Slot><span className="opacity-45 flex"><Overlap /></span></Slot>
            <div className="h-[8px] flex items-center"><span className="w-[22px] h-[1px] bg-[#d8d8d8]" /></div>
            <Slot><span className="opacity-45 flex"><Overlap /></span></Slot>
            <Slot><span className="opacity-45 flex"><Overlap /></span></Slot>
            <Slot><span className="opacity-45 flex"><Overlap /></span></Slot>
            <Tri />
            <div className="mt-[4px]"><Dots /></div>
            <div className="mt-[1px]">{viewCubes.map((c, i) => <Slot key={i}>{c}</Slot>)}</div>
            <Tri />
            <div className="mt-[4px]"><Dots /></div>
            <div className="mt-[2px]">{dimIcons.map((c, i) => <Slot key={i}>{c}</Slot>)}</div>
            <div className="h-[6px] flex items-center"><span className="w-[22px] h-[1px] bg-[#d8d8d8]" /></div>
            <Slot>
              <Ic>
                <path d="M2 15l1.500-8c.500-2 2-2 5-2" stroke="#1f4d80" strokeWidth="1.500" fill="none" />
                <path d="M0 11l3 4.500L5 11z" fill="#1f4d80" />
                <text x="9" y="8" fontSize="9" fontWeight="700" fontFamily="Liberation Sans, sans-serif" fill="#1f4d80">A</text>
              </Ic>
            </Slot>
            <Slot>
              <Ic>
                <path d="M4 1h8v4H4z" fill="#fff" stroke="#333" />
                <path d="M4 3h8M4 5h8" stroke="#333" />
                <rect x="4" y="6" width="8" height="9" fill="#777" />
                <rect x="6" y="6" width="3" height="9" fill="#aaa" />
              </Ic>
            </Slot>
            <Tri />
          </div>
        </div>

        <div className="w-[285px] shrink-0 flex flex-col">
          <div className="h-[25px] shrink-0 flex items-center text-[#444] text-[11.500px] pl-[4px]">
            Scene
            <span className="ml-auto w-0 h-0 border-x-[5px] border-x-transparent border-t-[5px] border-t-[#666] mr-[11px]" />
            <Pin size={11} className="text-[#555] mr-[8px]" />
            <X size={12} className="text-[#555] mr-[5px]" />
          </div>
          <div className="h-[20px] shrink-0 bg-white flex items-center justify-end pr-[1px]">
            <div className="w-[18px] h-[18px] bg-[#ece6dc] border border-[#d8d0c4] flex items-center justify-center mr-[4px]">
              <Ic><path d="M2 2l12 12M14 2L2 14" stroke="#d3302f" strokeWidth="2" /></Ic>
            </div>
            <TreeIcon />
          </div>
          <div className="flex-1 relative bg-white border border-[#8d8d8d] pt-[1px]">
            <div className="absolute left-[12px] top-[17px] h-[64px] border-l border-dotted border-[#666]" />
            <div className="h-[18px] flex items-center pl-[5px] gap-[3px] text-[#00002a] text-[11.500px]">
              <Ic>
                <path d="M1 2l5 3h4l5-3-3 5v4l3 3-5-2H6l-5 2 3-3V7z" fill="#e00f0f" />
                <rect x="5" y="6" width="6" height="5" fill="#600808" />
              </Ic>
              <span className="ml-[1px]">Scene3</span>
            </div>
            {treeRows.map(r => (
              <div key={r.label} className={`h-[18px] flex items-center pl-[8px] text-[#00002a] text-[11.500px] ${r.bold ? 'font-bold' : ''}`}>
                <span className="relative z-10 w-[9px] h-[9px] border border-[#8a94a8] bg-white flex items-center justify-center">
                  <span className="absolute w-[5px] h-[1px] bg-[#1c2a55]" />
                  <span className="absolute w-[1px] h-[5px] bg-[#1c2a55]" />
                </span>
                <span className="w-[5px] border-t border-dotted border-[#666]" />
                <span className="ml-[2px]"><span className="block">{r.icon}</span></span>
                <span className="ml-[4px]">{r.label}</span>
              </div>
            ))}
          </div>
          <div className="h-[21px] shrink-0 flex text-[#444] text-[11.500px]">
            <div className="w-[58px] ml-0 bg-[#f6f6f6] border-x border-b border-[#bdbdbd] flex items-center pl-[4px] gap-[4px]">
              <Ic w={13}><g transform="scale(.8)"><TreeNodes /></g></Ic>
              Scene
            </div>
            <div className="flex items-center pl-[5px] gap-[2px]">
              <Ic>
                <circle cx="6.500" cy="6.500" r="5.500" fill="#e8eef6" stroke="#7a8aa0" />
                <path d="M10 10l4.500 4.500" stroke="#d8902a" strokeWidth="3" />
              </Ic>
              Search
            </div>
            <div className="flex items-center pl-[11px] gap-[5px]">
              <Ic w={13}>
                <rect x=".5" y="1.500" width="12" height="14" fill="#fff" stroke="#222" />
                <rect x="2.500" y="3" width="7" height="6" fill="#345a94" />
                <path d="M3 12h6" stroke="#444" />
              </Ic>
              Properties
            </div>
          </div>
        </div>

        <div className="w-[7px] shrink-0" />
        <div className="flex-1 relative bg-[linear-gradient(180deg,#4f76a8_0%,#ffffff_100%)] border-l-2 border-[#77818c]">
          <Scene />
          <div className="absolute left-[481px] top-[536px] flex items-start">
            <div className="w-[72px] h-[30px] bg-white border border-black overflow-hidden pl-[6px] leading-[27px] text-[22px] text-black font-['Liberation_Sans',sans-serif]">45.000</div>
            <span className="bg-white mt-[3px] px-[2px] h-[22px] leading-[22px] text-[23px] font-bold italic text-black font-['Liberation_Sans',sans-serif]">#</span>
          </div>
        </div>
      </div>

      {/* catalog browser */}
      <div className="h-[34px] shrink-0 border-t border-[#d8d8d8] flex flex-col pt-[1px]">
        <div className="h-[26px] flex items-center pl-[7px] gap-[3px] text-[#444] text-[11.500px]">
          <Ic w={15}><rect x="1.500" y="1.500" width="10" height="12" fill="#fff" stroke="#555" /><path d="M11.500 1.500l2-.500v11l-2 1.500" fill="#ddd" stroke="#555" /><path d="M4 4.500h2v2H4zM7.500 4.500h2v2h-2zM4 9h2v2H4zM7.500 9h2v2h-2z" fill="#444" /></Ic>
          Catalog Browser
        </div>
        <div className="ml-[7px] w-[103px] h-[5px] bg-[#dbdbdb]" />
      </div>

      {/* status bar */}
      <div className="h-[23px] shrink-0 bg-[#f0f0f0] border-t border-[#c9c9c9] flex items-center text-[#444] text-[11px]">
        <span className="pl-[2px]">Move cursor to TriBall.</span>
        <div className="ml-auto flex items-center pr-[4px]">
          <span className="w-[138px] whitespace-pre">View size: 1361 x  746</span>
          <span className="w-[93px] whitespace-nowrap">Units: mm, deg</span>
          <StatusItem className="w-[20px]">{statusIcons.zoom}</StatusItem>
          <StatusItem className="w-[37px] pl-[3px]" caretClass="ml-[7px]">{statusIcons.zoom}</StatusItem>
          <StatusItem className="w-[35px]" caretClass="ml-[8px]">{statusIcons.yellow}</StatusItem>
          <StatusItem className="w-[35px]" caretClass="ml-[8px]">{statusIcons.blue}</StatusItem>
          <StatusItem className="w-[33px] pl-[2px]" caretClass="ml-[6px]">{statusIcons.orbit}</StatusItem>
          <StatusItem className="w-[24px] justify-center" active>{statusIcons.face}</StatusItem>
          <StatusItem className="w-[32px] pl-[2px]" caretClass="ml-[3px]">{statusIcons.glasses}</StatusItem>
          <StatusItem className="w-[30px] pl-[1px]" caretClass="ml-[4px]" active>{statusIcons.shade}</StatusItem>
          <StatusItem className="w-[39px] pl-[7px]" caretClass="ml-[2px]">{statusIcons.part}</StatusItem>
          <StatusItem className="w-[25px]"><SelectPart /></StatusItem>
          <StatusItem className="w-[21px]"><Cursor /></StatusItem>
          <StatusItem className="w-[23px]"><SelectFace /></StatusItem>
          <div className="w-[88px] h-[20px] bg-[#e3e3e3] border border-[#c4c4c4] flex items-center pl-[2px] pr-[4px] text-[#aaa] text-[11.500px] whitespace-nowrap overflow-hidden">
            Drilldown: Int
            <span className="ml-auto w-0 h-0 border-x-[3px] border-x-transparent border-t-[3px] border-t-[#aaa]" />
          </div>
          <div className="ml-[2px] w-[65px] h-[20px] bg-[#e3e3e3] border border-[#c4c4c4] flex items-center pl-[2px] pr-[4px] text-[#aaa] text-[11.500px]">
            Default
            <span className="ml-auto w-0 h-0 border-x-[3px] border-x-transparent border-t-[3px] border-t-[#aaa]" />
          </div>
          <div className="ml-[3px]"><LogicTree top="#e01010" l="#1040d0" r="#e8d020" /></div>
        </div>
      </div>
      <div className="h-[3px] shrink-0 bg-[#1c1c1c]" />
    </div>
  );
}
